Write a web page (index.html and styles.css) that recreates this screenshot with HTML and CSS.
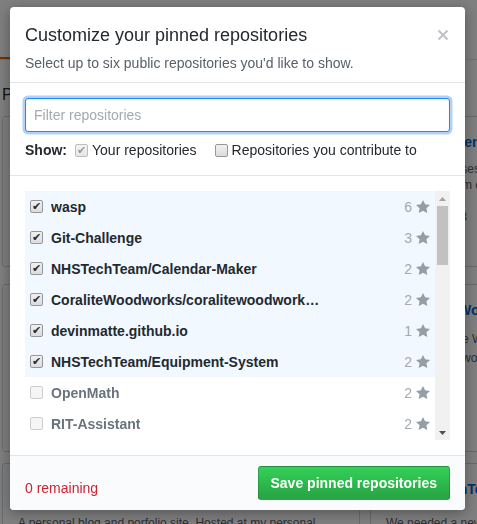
FILE: index.html
```html
<!DOCTYPE html>
<html lang="en">
<head>
<meta charset="utf-8">
<title>Customize your pinned repositories</title>
<link rel="stylesheet" href="styles.css">
</head>
<body>
<div class="page">
  <nav class="tabs">
    <span class="tab selected"></span>
    <span class="tab"></span>
  </nav>
  <h2 class="section-title">Pinned repositories</h2>
  <div class="pinned-row row1">
    <div class="card"></div>
    <div class="card">
      <div class="card-name">Git-Challenge</div>
      <p class="card-desc">A set of exercises of Git<br>commands from our community.</p>
      <p class="card-meta">&#9733; 3</p>
    </div>
  </div>
  <div class="pinned-row row2">
    <div class="card card-tall"></div>
    <div class="card card-tall">
      <div class="card-name">CoraliteWoodworks/coralitewoodworks.github.io</div>
      <p class="card-desc">Site for Coralite Woodworks, a small woodworking shop; it presents their work and products.</p>
    </div>
  </div>
  <div class="pinned-row row3">
    <div class="card">
      <div class="card-name">devinmatte.github.io</div>
      <p class="card-desc">A personal blog and porfolio site. Hosted at my personal domain.</p>
    </div>
    <div class="card">
      <div class="card-name">NHSTechTeam/Equipment-System</div>
      <p class="card-desc">We needed a new system to track our equipment.</p>
    </div>
  </div>
</div>

<div class="overlay"></div>

<div class="modal">
  <div class="modal-header">
    <div class="title-row">
      <h1 class="modal-title">Customize your pinned repositories</h1>
      <svg class="close" width="12" height="12" viewBox="0 0 12 12" aria-label="Close"><path d="M1.5 1.5l9 9M10.5 1.5l-9 9" stroke="currentColor" stroke-width="2" fill="none"/></svg>
    </div>
    <p class="modal-subtitle">Select up to six public repositories you'd like to show.</p>
  </div>

  <div class="filter-section">
    <input class="filter-input" type="text" placeholder="Filter repositories">
    <div class="show-row">
      <span class="show-label">Show:</span>
      <label class="show-option"><input class="check muted" type="checkbox" checked disabled>Your repositories</label>
      <label class="show-option second"><input class="check" type="checkbox">Repositories you contribute to</label>
    </div>
  </div>

  <div class="list-section">
    <div class="list-wrap">
      <ul class="repo-list">
        <li class="repo-item selected"><input class="check" type="checkbox" checked><span class="repo-item-name">wasp</span><span class="repo-stars">6 <svg class="star" width="14" height="16" viewBox="0 0 14 16"><path d="M14 6l-4.9-.64L7 1 4.9 5.36 0 6l3.6 3.26L2.67 14 7 11.67 11.33 14l-.93-4.74L14 6z"/></svg></span></li>
        <li class="repo-item selected"><input class="check" type="checkbox" checked><span class="repo-item-name">Git-Challenge</span><span class="repo-stars">3 <svg class="star" width="14" height="16" viewBox="0 0 14 16"><path d="M14 6l-4.9-.64L7 1 4.9 5.36 0 6l3.6 3.26L2.67 14 7 11.67 11.33 14l-.93-4.74L14 6z"/></svg></span></li>
        <li class="repo-item selected"><input class="check" type="checkbox" checked><span class="repo-item-name">NHSTechTeam/Calendar-Maker</span><span class="repo-stars">2 <svg class="star" width="14" height="16" viewBox="0 0 14 16"><path d="M14 6l-4.9-.64L7 1 4.9 5.36 0 6l3.6 3.26L2.67 14 7 11.67 11.33 14l-.93-4.74L14 6z"/></svg></span></li>
        <li class="repo-item selected"><input class="check" type="checkbox" checked><span class="repo-item-name">CoraliteWoodworks/coralitewoodworks.github.io</span><span class="repo-stars">2 <svg class="star" width="14" height="16" viewBox="0 0 14 16"><path d="M14 6l-4.9-.64L7 1 4.9 5.36 0 6l3.6 3.26L2.67 14 7 11.67 11.33 14l-.93-4.74L14 6z"/></svg></span></li>
        <li class="repo-item selected"><input class="check" type="checkbox" checked><span class="repo-item-name">devinmatte.github.io</span><span class="repo-stars">1 <svg class="star" width="14" height="16" viewBox="0 0 14 16"><path d="M14 6l-4.9-.64L7 1 4.9 5.36 0 6l3.6 3.26L2.67 14 7 11.67 11.33 14l-.93-4.74L14 6z"/></svg></span></li>
        <li class="repo-item selected"><input class="check" type="checkbox" checked><span class="repo-item-name">NHSTechTeam/Equipment-System</span><span class="repo-stars">2 <svg class="star" width="14" height="16" viewBox="0 0 14 16"><path d="M14 6l-4.9-.64L7 1 4.9 5.36 0 6l3.6 3.26L2.67 14 7 11.67 11.33 14l-.93-4.74L14 6z"/></svg></span></li>
        <li class="repo-item disabled"><input class="check" type="checkbox" disabled><span class="repo-item-name">OpenMath</span><span class="repo-stars">2 <svg class="star" width="14" height="16" viewBox="0 0 14 16"><path d="M14 6l-4.9-.64L7 1 4.9 5.36 0 6l3.6 3.26L2.67 14 7 11.67 11.33 14l-.93-4.74L14 6z"/></svg></span></li>
        <li class="repo-item disabled"><input class="check" type="checkbox" disabled><span class="repo-item-name">RIT-Assistant</span><span class="repo-stars">2 <svg class="star" width="14" height="16" viewBox="0 0 14 16"><path d="M14 6l-4.9-.64L7 1 4.9 5.36 0 6l3.6 3.26L2.67 14 7 11.67 11.33 14l-.93-4.74L14 6z"/></svg></span></li>
      </ul>
      <div class="scrollbar">
        <div class="sb-btn"><svg width="7" height="4" viewBox="0 0 7 4"><path d="M0 4L3.5 0 7 4z" fill="#a3a3a3"/></svg></div>
        <div class="sb-thumb"></div>
        <div class="sb-track"></div>
        <div class="sb-btn"><svg width="7" height="4" viewBox="0 0 7 4"><path d="M0 0h7L3.5 4z" fill="#505050"/></svg></div>
      </div>
    </div>
  </div>

  <div class="modal-footer">
    <span class="remaining">0 remaining</span>
    <button class="btn-primary" type="button">Save pinned repositories</button>
  </div>
</div>
</body>
</html>
```
FILE: styles.css
```css
* {
  box-sizing: border-box;
}

html,
body {
  margin: 0;
  padding: 0;
}

body {
  width: 477px;
  height: 524px;
  overflow: hidden;
  background: #fff;
  color: #24292e;
  font-family: "Liberation Sans", Arial, sans-serif;
  font-size: 14px;
  line-height: 20px;
}

/* ---------- underlying profile page ---------- */
.page {
  width: 740px;
}

.tabs {
  display: flex;
  align-items: flex-end;
  height: 60px;
  border-bottom: 1px solid #e1e4e8;
}

.tab {
  width: 100px;
  height: 20px;
  border-bottom: 2px solid transparent;
}

.tab.selected {
  border-bottom-color: #e36209;
}

.section-title {
  margin: 23px 0 9px 2px;
  font-size: 16px;
  font-weight: normal;
  line-height: 24px;
}

.pinned-row {
  display: flex;
  gap: 10px;
  margin-left: 2px;
}

.row1 {
  margin-bottom: 17px;
}

.row2 {
  margin-bottom: 11px;
}

.card {
  width: 358px;
  flex: none;
  height: 151px;
  padding: 15px;
  border: 1px solid #d1d5da;
  border-radius: 3px;
}

.card-tall {
  height: 168px;
}

.card-name {
  padding-left: 20px;
  color: #0366d6;
  font-weight: bold;
  white-space: nowrap;
}

.card-desc {
  margin: 9px 0 0;
  color: #586069;
  font-size: 12px;
  line-height: 16px;
}

.row2 .card-desc {
  margin-top: 10px;
  line-height: 19px;
}

.row3 .card-desc {
  margin-top: 15px;
  line-height: 18px;
}

.card-meta {
  margin: 14px 0 0;
  padding-left: 60px;
  color: #586069;
  font-size: 12px;
}

.overlay {
  position: fixed;
  inset: 0;
  background: rgba(0, 0, 0, 0.5);
}

/* ---------- modal ---------- */
.modal {
  position: fixed;
  left: 10px;
  top: 7px;
  width: 455px;
  background: #fff;
  border-radius: 4px;
  box-shadow: 0 3px 14px rgba(0, 0, 0, 0.35);
  overflow: hidden;
}

.modal-header {
  height: 76px;
  padding: 16px 15px 0;
  border-bottom: 1px solid #e1e4e8;
}

.title-row {
  display: flex;
  align-items: center;
  justify-content: space-between;
}

.modal-title {
  margin: 0;
  font-size: 18px;
  font-weight: normal;
  line-height: 24px;
  color: #24292e;
}

.close {
  color: #bfc3c7;
  margin-right: 1px;
}

.modal-subtitle {
  margin: 6px 0 0;
  color: #586069;
  line-height: 20px;
}

.filter-section {
  padding: 15px 15px 15px;
  border-bottom: 1px solid #e1e4e8;
}

.filter-input {
  display: block;
  width: 100%;
  height: 34px;
  padding: 6px 8px;
  font-family: "Liberation Sans", Arial, sans-serif;
  font-size: 14px;
  line-height: 20px;
  color: #24292e;
  border: 1px solid #2188ff;
  border-radius: 3px;
  outline: none;
  box-shadow: inset 0 1px 2px rgba(27, 31, 35, 0.075), 0 0 0 2.5px rgba(3, 102, 214, 0.3);
}

.filter-input::placeholder {
  color: #a3aab1;
}

.show-row {
  display: flex;
  align-items: center;
  margin-top: 8px;
  line-height: 20px;
}

.show-label {
  font-weight: bold;
  margin-right: 8px;
}

.show-option {
  display: flex;
  align-items: center;
}

.show-option .check {
  margin-right: 4px;
}

.show-option.second {
  margin-left: 18px;
}

/* checkboxes */
.check {
  -webkit-appearance: none;
  appearance: none;
  flex: none;
  width: 13px;
  height: 13px;
  margin: 0 8px 0 0;
  border: 1px solid #979797;
  border-radius: 2px;
  background: linear-gradient(#f0f0f0, #dcdcdc);
}

.check:checked::after {
  content: "\2714";
  display: block;
  text-align: center;
  font-family: "DejaVu Sans", sans-serif;
  font-size: 11px;
  line-height: 11px;
  color: #2b2b2b;
}

.check:disabled:not(:checked) {
  border-color: #cdcdcd;
  background: #f5f5f5;
}

.check.muted {
  border-color: #bdbdbd;
  background: linear-gradient(#f4f4f4, #e6e6e6);
}

.check.muted:checked::after {
  color: #9a9a9a;
}

/* repo list */
.list-section {
  padding: 15px 15px 15px;
}

.list-wrap {
  display: flex;
  height: 249px;
}

.repo-list {
  flex: 1;
  margin: 0;
  padding: 0;
  list-style: none;
  overflow: hidden;
}

.repo-item {
  display: flex;
  align-items: center;
  height: 31px;
  padding: 0 5px;
}

.repo-item.selected {
  background: #f1f8ff;
}

.repo-item-name {
  max-width: 272px;
  overflow: hidden;
  white-space: nowrap;
  text-overflow: ellipsis;
  font-weight: bold;
  color: #24292e;
}

.repo-item.disabled .repo-item-name {
  color: #6a737d;
}

.repo-stars {
  display: flex;
  align-items: center;
  gap: 4px;
  margin-left: auto;
  color: #a3aab1;
}

.star {
  fill: #959da5;
}

/* scrollbar */
.scrollbar {
  display: flex;
  flex-direction: column;
  width: 15px;
  background: #f1f1f1;
}

.sb-btn {
  display: flex;
  align-items: center;
  justify-content: center;
  height: 15px;
}

.sb-thumb {
  height: 59px;
  margin: 0 2px;
  background: #c1c1c1;
}

.sb-track {
  flex: 1;
}

/* footer */
.modal-footer {
  display: flex;
  align-items: flex-end;
  justify-content: space-between;
  padding: 10px 15px;
  background: #fafbfc;
  border-top: 1px solid #e1e4e8;
}

.remaining {
  padding-bottom: 2px;
  color: #cb2431;
}

.btn-primary {
  padding: 6px 12px;
  font-family: "Liberation Sans", Arial, sans-serif;
  font-size: 14px;
  font-weight: bold;
  line-height: 20px;
  color: #fff;
  border: 1px solid rgba(27, 31, 35, 0.2);
  border-radius: 3px;
  background-image: linear-gradient(-180deg, #34d058 0%, #28a745 90%);
}
```
